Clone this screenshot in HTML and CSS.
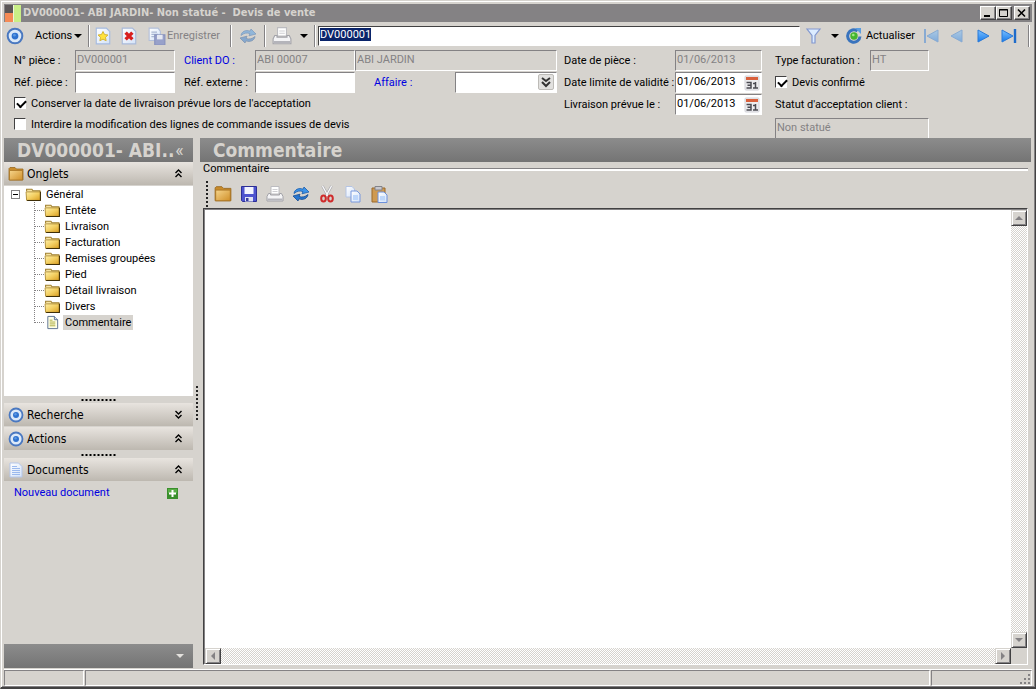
FILE: index.html
```html
<!DOCTYPE html>
<html lang="fr">
<head>
<meta charset="utf-8">
<title>DV000001- ABI JARDIN- Non statué - Devis de vente</title>
<link rel="stylesheet" href="styles.css">
</head>
<body>
<svg class="defs" aria-hidden="true">
  <defs>
    <linearGradient id="gold" x1="0" y1="0" x2="1" y2="1"><stop offset="0" stop-color="#fff0a8"/><stop offset=".5" stop-color="#f3cf62"/><stop offset="1" stop-color="#d99d20"/></linearGradient>
    <linearGradient id="tan" x1="0" y1="0" x2="1" y2="1"><stop offset="0" stop-color="#f6d58c"/><stop offset="1" stop-color="#d08f28"/></linearGradient>
    <linearGradient id="page" x1="0" y1="0" x2="1" y2="1"><stop offset="0" stop-color="#ffffff"/><stop offset="1" stop-color="#d3e2f8"/></linearGradient>
    <linearGradient id="blue" x1="0" y1="0" x2="0" y2="1"><stop offset="0" stop-color="#7cc0ff"/><stop offset="1" stop-color="#1579ea"/></linearGradient>
    <symbol id="target" viewBox="0 0 16 16"><circle cx="8" cy="8" r="6.500" fill="#dce9f8" stroke="#4a78c0" stroke-width="1.800"/><circle cx="8" cy="8" r="3" fill="#2f72cf"/><circle cx="7.500" cy="7.300" r="1.200" fill="#5a98e2"/></symbol>
    <symbol id="folder" viewBox="0 0 16 16"><path d="M1 2.500 2 1.500h5l1.500 1.500H15v11H1z" fill="#c98c2c" stroke="#9a6a20" stroke-width=".8"/><path d="M1.500 4.500h13v9.500h-13z" fill="url(#tan)" stroke="#a87526" stroke-width=".8"/></symbol>
    <symbol id="treefolder" viewBox="0 0 16 14"><path d="M1.500 4V2h5l1 1.500h6.500v2" fill="#f6e3a0" stroke="#a08030"/><path d="M1 4.500h13.500v8H1.500z" fill="url(#gold)" stroke="#a8842c" stroke-width=".8"/><path d="M14.500 4.500V12.700H2" fill="none" stroke="#3f2f08"/></symbol>
    <symbol id="note" viewBox="0 0 16 16"><path d="M3 1.500h7l3.500 3.500v9.500H3z" fill="#ffffe6" stroke="#5a6f90"/><path d="M10 1.500V5h3.500" fill="#dbe5f2" stroke="#5a6f90"/><path d="M5 7.500h6M5 9.500h6M5 11.500h6M5 5.500h3" stroke="#a9a93b"/></symbol>
    <symbol id="doc" viewBox="0 0 16 16"><path d="M2 1h8.500l3.500 3.500V15H2z" fill="url(#page)" stroke="#b4c6ea"/><path d="M4 4.500h5M4 6.500h8M4 8.500h8M4 10.500h8M4 12.500h8" stroke="#9bb9ee"/></symbol>
    <symbol id="printer" viewBox="0 0 18 18"><path d="M5 1.500h8V9H5z" fill="#fff" stroke="#bcbcc0"/><path d="M6.500 4.500h5M6.500 6.500h5" stroke="#cfcfd3"/><path d="M2.500 8.500H4.500V10h9V8.500h2l1.500 3V16H1v-4.500z" fill="#f4f4f6" stroke="#a2a2a8"/><path d="M1.500 14.500h15" stroke="#b4b4ba" stroke-width="2"/></symbol>
    <symbol id="sync" viewBox="0 0 18 18"><path d="M2 8.500C2.500 4.500 7 2.500 11 4.200L12 2l5 5-7 1.800 1-2.200C8 5.400 5 6 2 8.500z" fill="#3c93e8" stroke="#1b5cab" stroke-width=".8"/><path d="M16 9.500c-.5 4-5 6-9 4.300L6 16l-5-5 7-1.800-1 2.200c3 1.200 6 .6 9-1.900z" fill="#2776cf" stroke="#164b91" stroke-width=".8"/></symbol>
    <symbol id="cal" viewBox="0 0 16 16"><rect x="1" y="1" width="14" height="14" rx="1" fill="#ececef" stroke="#d2d2d8"/><path d="M2 2h12v3H2z" fill="#d9603c"/><path d="M2.500 7.500H7v5.500H2.500M3.500 10.200H7M9 8.500h2.500M11.500 7v6M9 13h5" fill="none" stroke="#4a4a52" stroke-width="1.500"/></symbol>
    <symbol id="up2" viewBox="0 0 8 9"><path d="M1 4 4 1l3 3M1 8l3-3 3 3" fill="none" stroke="#000" stroke-width="1.400"/></symbol>
    <symbol id="down2" viewBox="0 0 8 9"><path d="m1 1 3 3 3-3M1 5l3 3 3-3" fill="none" stroke="#000" stroke-width="1.400"/></symbol>
  </defs>
</svg>
<div class="window">
  <header class="titlebar">
    <svg class="applogo" viewBox="0 0 18 17"><path d="M1 0h9v8H1z" fill="#5b5656"/><path d="M1 8h8v9H1z" fill="#f58a55"/><path d="M10 0h7v17h-7z" fill="#c9ef86"/><path d="M9 0h1v17H9z" fill="#eef5dc"/></svg>
    <h1 class="caption">DV000001- ABI JARDIN- Non statué -&nbsp; Devis de vente</h1>
    <button class="winbtn" aria-label="Réduire"><svg viewBox="0 0 12 10"><path d="M2 8h6" stroke="#000" stroke-width="2"/></svg></button>
    <button class="winbtn" aria-label="Agrandir"><svg viewBox="0 0 12 10"><path d="M1.500 1.500h8v7h-8zM1 2h9" fill="none" stroke="#000"/></svg></button>
    <button class="winbtn close" aria-label="Fermer"><svg viewBox="0 0 12 10"><path d="m2 1.500 7 7m0-7-7 7" stroke="#000" stroke-width="1.600"/></svg></button>
  </header>

  <div class="toolbar">
    <button class="tool menu"><svg class="i18"><use href="#target"/></svg><span>Actions</span><span class="caret"></span></button>
    <span class="sep"></span>
    <button class="tool" aria-label="Nouveau"><svg class="i18" viewBox="0 0 16 16"><path d="M2 1h9l3 3v11H2z" fill="url(#page)" stroke="#a5bbe0"/><path d="m8 4 1.400 2.700 3 .4-2.200 2.100.6 3L8 10.800l-2.800 1.400.6-3-2.200-2.100 3-.4z" fill="#ffe23c" stroke="#d0b030" stroke-width=".8"/></svg></button>
    <button class="tool" aria-label="Supprimer"><svg class="i18" viewBox="0 0 16 16"><path d="M2 1h9l3 3v11H2z" fill="url(#page)" stroke="#a9bada"/><path d="m5 5 6 6m0-6-6 6" stroke="#d81e1e" stroke-width="3"/></svg></button>
    <button class="tool save off"><svg class="i18" viewBox="0 0 16 16"><path d="M1 1h8l2 3v8H1z" fill="url(#page)" stroke="#b3c0da"/><path d="M3 4.500h5M3 6.500h6M3 8.500h4" stroke="#a9b7d2"/><path d="M6 7h9v9H6z" fill="#98a1ca" stroke="#8791bd"/><path d="M8 7h5v4H8z" fill="#e5e8f2"/></svg><span>Enregistrer</span></button>
    <span class="sep"></span>
    <button class="tool sync off" aria-label="Synchroniser"><svg class="i18 faded"><use href="#sync"/></svg></button>
    <span class="sep"></span>
    <button class="tool print" aria-label="Imprimer"><svg class="i20"><use href="#printer"/></svg><span class="caret"></span></button>
    <span class="sep"></span>
    <input class="search" id="search" type="text" value="DV000001" aria-label="Recherche">
    <button class="tool filter" aria-label="Filtrer"><svg class="i18" viewBox="0 0 18 18"><path d="M3 2h13l-5 6.500V16H8V8.500z" fill="#dcecff" stroke="#8398cf" stroke-width="1.200"/></svg><span class="caret"></span></button>
    <button class="tool refresh"><svg class="i18" viewBox="0 0 18 18"><path d="M12.500 4A6.200 6.200 0 1 0 15 9.500" fill="none" stroke="#3973bd" stroke-width="3"/><path d="M10 1h6v6z" fill="#5a9de0"/><circle cx="9" cy="9" r="3.700" fill="#45b52f"/><circle cx="8.300" cy="8" r="1.300" fill="#a2e886"/></svg><span>Actualiser</span></button>
    <button class="tool nav faded" aria-label="Premier"><svg class="i18" viewBox="0 0 18 18"><path d="M3 2v14" stroke="#2b7ad8" stroke-width="2"/><path d="M16 3v12L5 9z" fill="url(#blue)" stroke="#2b7ad8"/></svg></button>
    <button class="tool nav faded" aria-label="Précédent"><svg class="i18" viewBox="0 0 18 18"><path d="M14 3v12L3 9z" fill="url(#blue)" stroke="#2b7ad8"/></svg></button>
    <button class="tool nav" aria-label="Suivant"><svg class="i18" viewBox="0 0 18 18"><path d="M4 3v12l11-6z" fill="url(#blue)" stroke="#2b7ad8"/></svg></button>
    <button class="tool nav" aria-label="Dernier"><svg class="i18" viewBox="0 0 18 18"><path d="M2 3v12l11-6z" fill="url(#blue)" stroke="#2b7ad8"/><path d="M15 2v14" stroke="#1f6cca" stroke-width="2.400"/></svg></button>
    <span class="sep last"></span>
  </div>

  <form class="form">
    <div class="ids">
      <label for="num">N° pièce :</label>
      <input id="num" type="text" value="DV000001" disabled>
      <label class="inset" for="client"><a href="#client">Client DO :</a></label>
      <input id="client" type="text" value="ABI 00007" disabled>
      <input class="wide" type="text" value="ABI JARDIN" aria-label="Nom du client" disabled>
      <label for="refp">Réf. pièce :</label>
      <input id="refp" type="text">
      <label class="inset" for="refe">Réf. externe :</label>
      <input id="refe" type="text">
      <label class="deal" for="affaire"><a href="#affaire">Affaire :</a></label>
      <div class="combo"><input id="affaire" type="text"><button type="button" class="pick" aria-label="Choisir"><svg viewBox="0 0 12 12"><path d="m2 2 4 3 4-3M2 6l4 4 4-4" fill="none" stroke="#333" stroke-width="2"/></svg></button></div>
      <label class="tick"><input type="checkbox" checked>Conserver la date de livraison prévue lors de l'acceptation</label>
      <label class="tick"><input type="checkbox">Interdire la modification des lignes de commande issues de devis</label>
    </div>
    <div class="dates">
      <label for="d1">Date de pièce :</label>
      <input id="d1" type="text" value="01/06/2013" disabled>
      <label for="d2">Date limite de validité :</label>
      <div class="combo"><input id="d2" type="text" value="01/06/2013"><button type="button" class="day" aria-label="Calendrier"><svg><use href="#cal"/></svg></button></div>
      <label for="d3">Livraison prévue le :</label>
      <div class="combo"><input id="d3" type="text" value="01/06/2013"><button type="button" class="day" aria-label="Calendrier"><svg><use href="#cal"/></svg></button></div>
    </div>
    <div class="state">
      <div class="billing"><label for="type">Type facturation :</label><input id="type" type="text" value="HT" disabled></div>
      <label class="tick"><input type="checkbox" checked>Devis confirmé</label>
      <label for="statut">Statut d'acceptation client :</label>
      <input class="statut" id="statut" type="text" value="Non statué" disabled>
    </div>
  </form>

  <div class="body">
    <aside class="side">
      <div class="banner"><h2>DV000001- ABI..</h2><button class="fold" aria-label="Replier">«</button></div>
      <button class="section"><svg class="i16"><use href="#folder"/></svg><span>Onglets</span><svg class="chev"><use href="#up2"/></svg></button>
      <div class="tree">
        <div class="node root"><button class="minus" aria-label="Replier Général"></button><svg class="fold-i"><use href="#treefolder"/></svg><span>Général</span></div>
        <ul>
          <li class="node"><svg class="fold-i"><use href="#treefolder"/></svg><span>Entête</span></li>
          <li class="node"><svg class="fold-i"><use href="#treefolder"/></svg><span>Livraison</span></li>
          <li class="node"><svg class="fold-i"><use href="#treefolder"/></svg><span>Facturation</span></li>
          <li class="node"><svg class="fold-i"><use href="#treefolder"/></svg><span>Remises groupées</span></li>
          <li class="node"><svg class="fold-i"><use href="#treefolder"/></svg><span>Pied</span></li>
          <li class="node"><svg class="fold-i"><use href="#treefolder"/></svg><span>Détail livraison</span></li>
          <li class="node"><svg class="fold-i"><use href="#treefolder"/></svg><span>Divers</span></li>
          <li class="node"><svg class="fold-i"><use href="#note"/></svg><span class="current">Commentaire</span></li>
        </ul>
      </div>
      <div class="grip"></div>
      <button class="section"><svg class="i16"><use href="#target"/></svg><span>Recherche</span><svg class="chev"><use href="#down2"/></svg></button>
      <button class="section"><svg class="i16"><use href="#target"/></svg><span>Actions</span><svg class="chev"><use href="#up2"/></svg></button>
      <div class="grip"></div>
      <button class="section"><svg class="i16"><use href="#doc"/></svg><span>Documents</span><svg class="chev"><use href="#up2"/></svg></button>
      <div class="docs"><a href="#nouveau">Nouveau document</a><button class="add" aria-label="Ajouter"><svg viewBox="0 0 11 11"><path d="M0 0h11v11H0z" fill="#3a8f2c"/><path d="M1 1h9v4H1z" fill="#58ad45"/><path d="M5.500 2v7M2 5.500h7" stroke="#fff" stroke-width="2"/></svg></button></div>
      <div class="sidefoot"><button aria-label="Options"><span class="caret pale"></span></button></div>
    </aside>
    <div class="splitter"><span></span></div>
    <main class="content">
      <div class="banner"><h2>Commentaire</h2></div>
      <fieldset class="group">
        <legend>Commentaire</legend>
        <div class="edit">
          <span class="handle"></span>
          <button class="tool" aria-label="Ouvrir"><svg class="i18"><use href="#folder"/></svg></button>
          <button class="tool" aria-label="Enregistrer"><svg class="i18" viewBox="0 0 18 18"><path d="M1.500 1.500h15v15h-14l-1-1z" fill="#4d53cf" stroke="#2c2f96"/><path d="M4.500 2h9v7h-9z" fill="#f2f4ff"/><path d="M5 12h8v4.500H5z" fill="#dfe2f4"/><path d="M6 13h2.500v3H6z" fill="#383d9e"/></svg></button>
          <button class="tool" aria-label="Imprimer"><svg class="i18"><use href="#printer"/></svg></button>
          <button class="tool" aria-label="Synchroniser"><svg class="i18"><use href="#sync"/></svg></button>
          <button class="tool" aria-label="Couper"><svg class="i18" viewBox="0 0 18 18"><path d="m4.500 1 6 11M13.500 1l-6 11" stroke="#a4a4aa" stroke-width="2.600"/><path d="m4.500 1 6 11M13.500 1l-6 11" stroke="#f8f8fa" stroke-width="1.400"/><ellipse cx="5.500" cy="13.500" rx="2.300" ry="3" fill="none" stroke="#cf2b2b" stroke-width="2"/><ellipse cx="12.500" cy="13.500" rx="2.300" ry="3" fill="none" stroke="#cf2b2b" stroke-width="2"/></svg></button>
          <button class="tool" aria-label="Copier"><svg class="i18" viewBox="0 0 18 18"><path d="M2 1.500h6l2.500 2.500v8H2z" fill="url(#page)" stroke="#b4c4e4"/><path d="M7 6h6l3 3v8H7z" fill="url(#page)" stroke="#7898dc"/><path d="M9 10h5v5H9z" fill="#bdd6fa"/></svg></button>
          <button class="tool" aria-label="Coller"><svg class="i18" viewBox="0 0 18 18"><path d="M2 3h13v14H2z" fill="#cf9a51" stroke="#99682b"/><path d="M5 1.500h7v3.500H5z" fill="#c8c8ce" stroke="#83838a"/><path d="M8 7h6l3 3v7.500H8z" fill="url(#page)" stroke="#6c90da"/><path d="M10 11h5v4.500h-5z" fill="#bdd6fa"/></svg></button>
        </div>
        <div class="editor">
          <textarea aria-label="Texte du commentaire"></textarea>
          <div class="vbar"><button aria-label="Haut"><i class="tri up"></i></button><button aria-label="Bas"><i class="tri down"></i></button></div>
          <div class="hbar"><button aria-label="Gauche"><i class="tri left"></i></button><button aria-label="Droite"><i class="tri right"></i></button></div>
          <div class="corner"></div>
        </div>
      </fieldset>
    </main>
  </div>

  <footer class="status"><span class="cell first"></span><span class="cell mid"></span><span class="cell end"><svg viewBox="0 0 12 12"><path d="M9 1h2v2H9zM5 5h2v2H5zM9 5h2v2H9zM1 9h2v2H1zM5 9h2v2H5zM9 9h2v2H9z" fill="#848284"/></svg></span></footer>
</div>
<script src="main.js"></script>
</body>
</html>
```
FILE: styles.css
```css
* { box-sizing: border-box; }
body {
  margin: 0;
  background: #d6d3ce;
  color: #000;
  font: 11px/16px Roboto, "Liberation Sans", Arial, sans-serif;
}
.defs { position: absolute; width: 0; height: 0; }
button { margin: 0; padding: 0; border: 0; background: none; color: inherit; font: inherit; }
h1, h2, ul, fieldset { margin: 0; padding: 0; }
svg { display: block; flex: none; }
a { color: #0000e0; text-decoration: none; }
.i16 { width: 16px; height: 16px; }
.i18 { width: 18px; height: 18px; }
.i20 { width: 20px; height: 20px; }
.faded { opacity: .45; }
.caret { border: 4px solid transparent; border-top-color: #000; border-bottom: 0; }
.caret.pale { border-top-color: #e4e2de; }

.window {
  display: flex;
  flex-direction: column;
  height: 100vh;
  padding: 2px 2px 1px;
  border: 1px solid #d6d3ce;
  border-right-color: #424142;
  border-bottom: 2px solid #424142;
  box-shadow: inset 1px 1px #fff, inset -1px -1px #848284;
}
.titlebar {
  display: flex;
  align-items: center;
  height: 18px;
  margin: 1px 1px 0;
  padding-right: 2px;
  background: #848284;
}
.applogo { width: 18px; height: 17px; }
.caption { flex: 1; padding-left: 1px; color: #d6d3ce; font: bold 11px/18px "DejaVu Sans Condensed", Tahoma, sans-serif; }
.winbtn {
  display: flex;
  align-items: center;
  justify-content: center;
  width: 16px;
  height: 14px;
  background: #d6d3ce;
  border: 1px solid;
  border-color: #fff #424142 #424142 #fff;
  box-shadow: inset -1px -1px #848284;
}
.winbtn svg { width: 12px; height: 10px; }
.winbtn.close { margin-left: 2px; }

.toolbar { display: flex; align-items: center; height: 27px; padding: 0 3px; }
.tool { display: flex; align-items: center; height: 22px; }
.toolbar .tool { width: 26px; justify-content: center; }
.toolbar .menu { width: 82px; justify-content: flex-start; }
.menu span:nth-child(2) { margin-left: 11px; }
.menu .caret { margin-left: 2px; }
.toolbar .save { width: 88px; gap: 1px; padding-left: 6px; justify-content: flex-start; }
.off { color: #848284; }
.toolbar .sync { width: 32px; }
.toolbar .print { width: 48px; gap: 8px; }
.sep { flex: none; width: 2px; height: 22px; border-left: 1px solid #848284; border-right: 1px solid #fff; }
.search {
  flex: 1;
  min-width: 0;
  height: 20px;
  margin-left: 2px;
  padding: 0 0 2px 1px;
  border: 1px solid;
  border-color: #424142 #fff #fff #424142;
  background: #fff;
  font: inherit;
  outline: 0;
}
.search::selection { background: #0a246a; color: #fff; }
.toolbar .filter { width: 42px; gap: 9px; }
.toolbar .refresh { width: 76px; gap: 3px; }
.sep.last { margin-left: 6px; }

.form { display: flex; align-items: flex-start; height: 89px; padding: 1px 0 0 11px; overflow: hidden; }
.form input[type="text"] {
  width: 100%;
  height: 21px;
  padding: 0 0 3px 1px;
  border: 1px solid;
  border-color: #848284 #fff #fff #848284;
  border-radius: 0;
  background: #fff;
  color: #000;
  font: inherit;
}
.form input[type="text"]:disabled { background: #d6d3ce; color: #848284; }
.form label { white-space: nowrap; line-height: 22px; }
.ids { display: grid; grid-template-columns: 61px 100px 80px 100px 100px 102px; grid-template-rows: 22px 22px 20px 22px; }
.ids .inset { padding-left: 9px; }
.ids .wide { grid-column: span 2; }
.ids .deal { padding-left: 19px; }
.ids .tick { grid-column: 1 / -1; }
.tick { display: flex; align-items: center; gap: 5px; }
.tick input {
  appearance: none;
  width: 12px;
  height: 12px;
  margin: 0 0 2px;
  border: 1px solid;
  border-color: #424142 #fff #fff #424142;
  background: #fff;
}
.tick input:checked::before {
  content: "";
  display: block;
  width: 7px;
  height: 4px;
  margin: 2px 0 0 2px;
  border: solid #000;
  border-width: 0 0 2px 2px;
  transform: rotate(-45deg);
}
.combo { display: flex; height: 21px; background: #fff; border: 1px solid; border-color: #848284 #fff #fff #848284; }
.form .combo input[type="text"] { flex: 1; min-width: 0; height: 19px; border: 0; }
.pick { width: 16px; height: 16px; margin: 1px 2px; padding: 1px; background: #e2e1df; border: 1px solid #bdbbb7; border-radius: 2px; }
.pick svg { width: 12px; height: 12px; }
.day { width: 16px; height: 16px; margin: 2px 1px; }
.day svg { width: 16px; height: 16px; }
.dates { display: grid; grid-template-columns: 111px 87px; grid-auto-rows: 22px; margin-left: 7px; }
.state { display: grid; grid-template-rows: 22px 22px 24px 20px; margin-left: 13px; }
.billing { display: flex; }
.billing label { width: 95px; }
.form .billing input { width: 59px; }
.form .statut { width: 122px; }

.body { display: flex; flex: 1; min-height: 0; padding: 0 2px 0 1px; }
.side { display: flex; flex-direction: column; width: 189px; }
.banner {
  display: flex;
  align-items: center;
  height: 24px;
  flex: none;
  padding-left: 13px;
  background: linear-gradient(#8c8c8c, #747474);
  color: #d6d3ce;
}
.banner h2 { white-space: nowrap; font: bold 19px/24px "DejaVu Sans Condensed", Tahoma, sans-serif; }
.fold { width: 10px; font-size: 18px; }
.section {
  display: flex;
  align-items: center;
  height: 24px;
  flex: none;
  gap: 3px;
  padding: 0 10px 0 4px;
  background: linear-gradient(#e8e4df, #bdb8b0);
  border-bottom: 1px solid #d6d3ce;
  font: 12px/22px "DejaVu Sans Condensed", Tahoma, sans-serif;
  text-align: left;
}
.section span { flex: 1; }
.chev { width: 9px; height: 9px; }
.tree { height: 210px; padding: 0 0 0 7px; background: #fff; }
.node { display: flex; align-items: center; height: 16px; list-style: none; }
.fold-i { width: 17px; height: 15px; }
.node span { padding: 0 2px; margin-left: 2px; line-height: 15px; }
.node .current { background: #d6d3ce; }
.minus { width: 9px; height: 9px; border: 1px solid #848284; background: linear-gradient(#000, #000) center / 5px 1px no-repeat #fff; }
.root .minus { margin-right: 5px; }
.tree ul { margin-left: 23px; background: repeating-linear-gradient(#848284 0 1px, transparent 1px 2px) 0 0 / 1px 120px no-repeat; }
.tree li::before { content: ""; width: 10px; border-top: 1px dotted #848284; }
.grip { height: 7px; flex: none; background: radial-gradient(circle, #000 1px, transparent 1px) center / 4px 4px repeat-x; margin: 0 77px; }
.docs { display: flex; align-items: center; justify-content: space-between; height: 22px; padding: 0 15px 0 10px; }
.add svg { width: 11px; height: 11px; }
.sidefoot { display: flex; align-items: center; justify-content: flex-end; height: 24px; margin-top: auto; padding-right: 9px; background: linear-gradient(#8c8c8c, #747474); }
.sidefoot button { display: flex; }
.splitter { display: flex; align-items: center; justify-content: center; width: 7px; }
.splitter span { width: 2px; height: 35px; background: repeating-linear-gradient(#222 0 2px, #d6d3ce 2px 4px); }
.content { display: flex; flex-direction: column; flex: 1; min-width: 0; }
.group { display: flex; flex-direction: column; flex: 1; min-width: 0; min-height: 0; border: 0; padding: 0 3px 3px; }
legend { display: flex; width: 100%; align-items: center; padding: 0; line-height: 14px; }
legend::after { content: ""; flex: 1; height: 2px; background: #fff; border-top: 1px solid #848284; }
.edit { display: flex; align-items: center; gap: 8px; height: 32px; padding: 3px 0 0 3px; }
.handle { width: 2px; height: 26px; margin-right: -2px; background: repeating-linear-gradient(#222 0 2px, #d6d3ce 2px 4px); }
.editor {
  display: grid;
  flex: 1;
  grid-template: 1fr 16px / 1fr 16px;
  min-height: 0;
  border: 1px solid;
  border-color: #424142 #fff #fff #424142;
  box-shadow: inset 1px 1px #848284;
  padding: 1px 0 0 1px;
}
.editor textarea { width: 100%; height: 100%; border: 0; padding: 2px; resize: none; outline: 0; background: #fff; font: inherit; }
.vbar, .hbar { display: flex; justify-content: space-between; background: repeating-conic-gradient(#fff 0 25%, #d6d3ce 0 50%) 0 0 / 2px 2px; }
.vbar { flex-direction: column; }
.vbar button, .hbar button {
  display: flex;
  align-items: center;
  justify-content: center;
  width: 16px;
  height: 16px;
  background: #d6d3ce;
  border: 1px solid;
  border-color: #d6d3ce #424142 #424142 #d6d3ce;
  box-shadow: inset 1px 1px #fff, inset -1px -1px #848284;
}
.tri { border: 4px solid transparent; }
.up { border-top: 0; border-bottom-color: #848284; }
.down { border-bottom: 0; border-top-color: #848284; }
.left { border-left: 0; border-right-color: #848284; }
.right { border-right: 0; border-left-color: #848284; }
.status { display: flex; flex: none; gap: 1px; height: 17px; margin: 1px 1px 0; border-top: 1px solid #fff; }
.cell { border: 1px solid; border-color: #848284 #fff #fff #848284; }
.first { width: 80px; }
.mid { flex: 1; }
.end { display: flex; align-items: flex-end; justify-content: flex-end; width: 101px; }
.end svg { width: 12px; height: 12px; }
```
FILE: main.js
```js
const search = document.getElementById('search');
search.focus();
search.select();
```
